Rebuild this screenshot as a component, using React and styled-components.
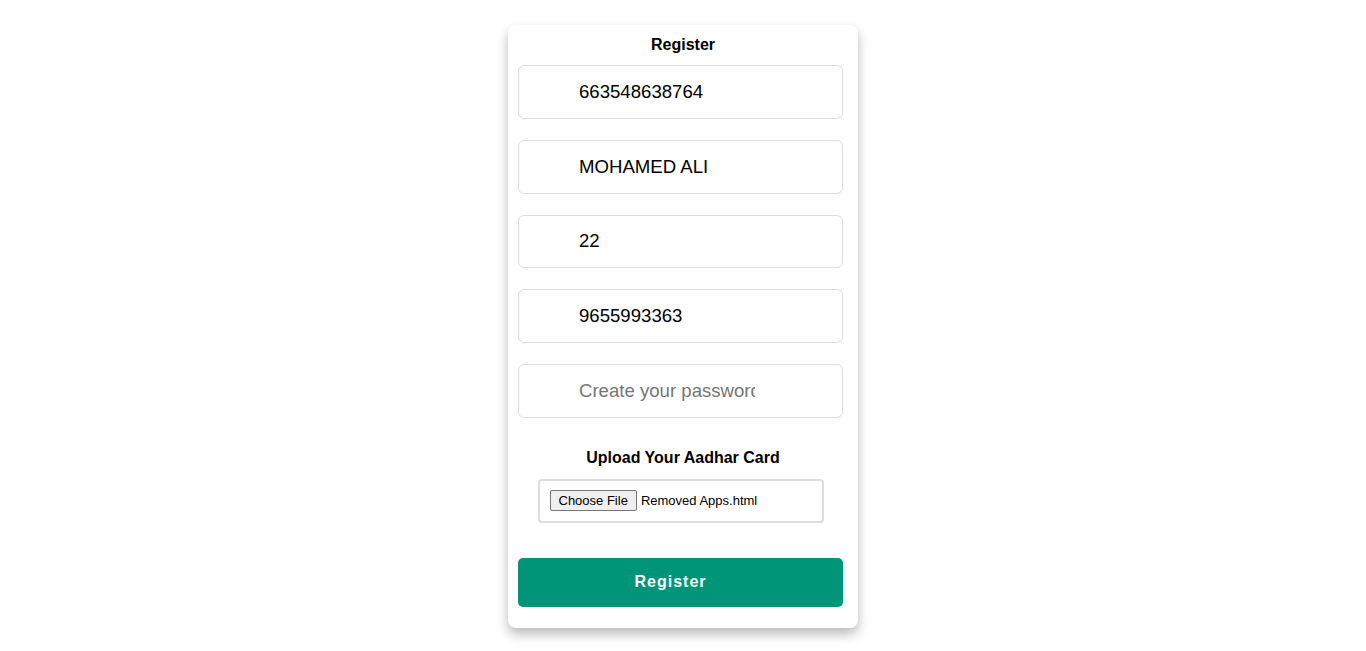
import React from "react";
import styled, { createGlobalStyle } from "styled-components";

const Global = createGlobalStyle`
  html, body {
    margin: 0;
    background: #fff;
    font-family: "Liberation Sans", Arial, sans-serif;
  }
`;

const Page = styled.div`
  display: flex;
  justify-content: center;
  align-items: flex-start;
  padding: 25px 0 24px;
  min-height: 651px;
  box-sizing: border-box;
`;

const Card = styled.form`
  width: 350px;
  box-sizing: border-box;
  padding: 11px 15px 21px 10px;
  background: #fff;
  border-radius: 8px;
  box-shadow: 0 6px 12px rgba(0, 0, 0, 0.28);
  display: flex;
  flex-direction: column;
`;

const Title = styled.div`
  text-align: center;
  font-weight: bold;
  font-size: 16px;
  color: #000;
  line-height: 18px;
  margin-bottom: 11px;
  padding-left: 5px;
`;

const Field = styled.div`
  height: 53.75px;
  box-sizing: border-box;
  border: 1px solid #ddd;
  border-radius: 6px;
  padding: 0 87px 0 60px;
  display: flex;
  align-items: center;
  font-size: 18.6px;
  color: ${(p) => (p.$placeholder ? "#757575" : "#000")};
  margin-bottom: ${(p) => p.$gap}px;
`;

const FieldText = styled.span`
  flex: 1;
  white-space: nowrap;
  overflow: hidden;
`;

const UploadLabel = styled.div`
  text-align: center;
  font-weight: bold;
  font-size: 16px;
  color: #000;
  margin-top: 31px;
  padding-left: 5px;
  line-height: 18px;
`;

const FileBox = styled.div`
  align-self: center;
  width: 286px;
  height: 44px;
  box-sizing: border-box;
  border: 2px solid #ddd;
  border-radius: 4px;
  margin-top: 12px;
  padding-left: 10px;
  display: flex;
  align-items: center;
  gap: 4px;
  font-size: 13px;
  color: #000;
`;

const ChooseButton = styled.button`
  font-family: "Liberation Sans", Arial, sans-serif;
  font-size: 13px;
  height: 21px;
  padding: 0 8px;
  background: #efefef;
  border: 1px solid #767676;
  border-radius: 2px;
  color: #000;
`;

const Submit = styled.button`
  margin-top: 35px;
  height: 49px;
  border: none;
  border-radius: 5px;
  background: #009579;
  color: #fff;
  font-family: "Liberation Sans", Arial, sans-serif;
  font-weight: bold;
  font-size: 16px;
  letter-spacing: 1px;
  padding-right: 26px;
`;

const fields = [
  { value: "663548638764" },
  { value: "MOHAMED ALI" },
  { value: "22" },
  { value: "9655993363" },
  { value: "Create your password", placeholder: true },
];

export default function App() {
  return (
    <>
      <Global />
      <Page>
        <Card onSubmit={(e) => e.preventDefault()}>
          <Title>Register</Title>
          {fields.map((f, i) => (
            <Field key={i} $placeholder={f.placeholder} $gap={i < fields.length - 1 ? 21 : 0}>
              <FieldText>{f.value}</FieldText>
            </Field>
          ))}
          <UploadLabel>Upload Your Aadhar Card</UploadLabel>
          <FileBox>
            <ChooseButton type="button">Choose File</ChooseButton>
            <span>Removed Apps.html</span>
          </FileBox>
          <Submit type="submit">Register</Submit>
        </Card>
      </Page>
    </>
  );
}
